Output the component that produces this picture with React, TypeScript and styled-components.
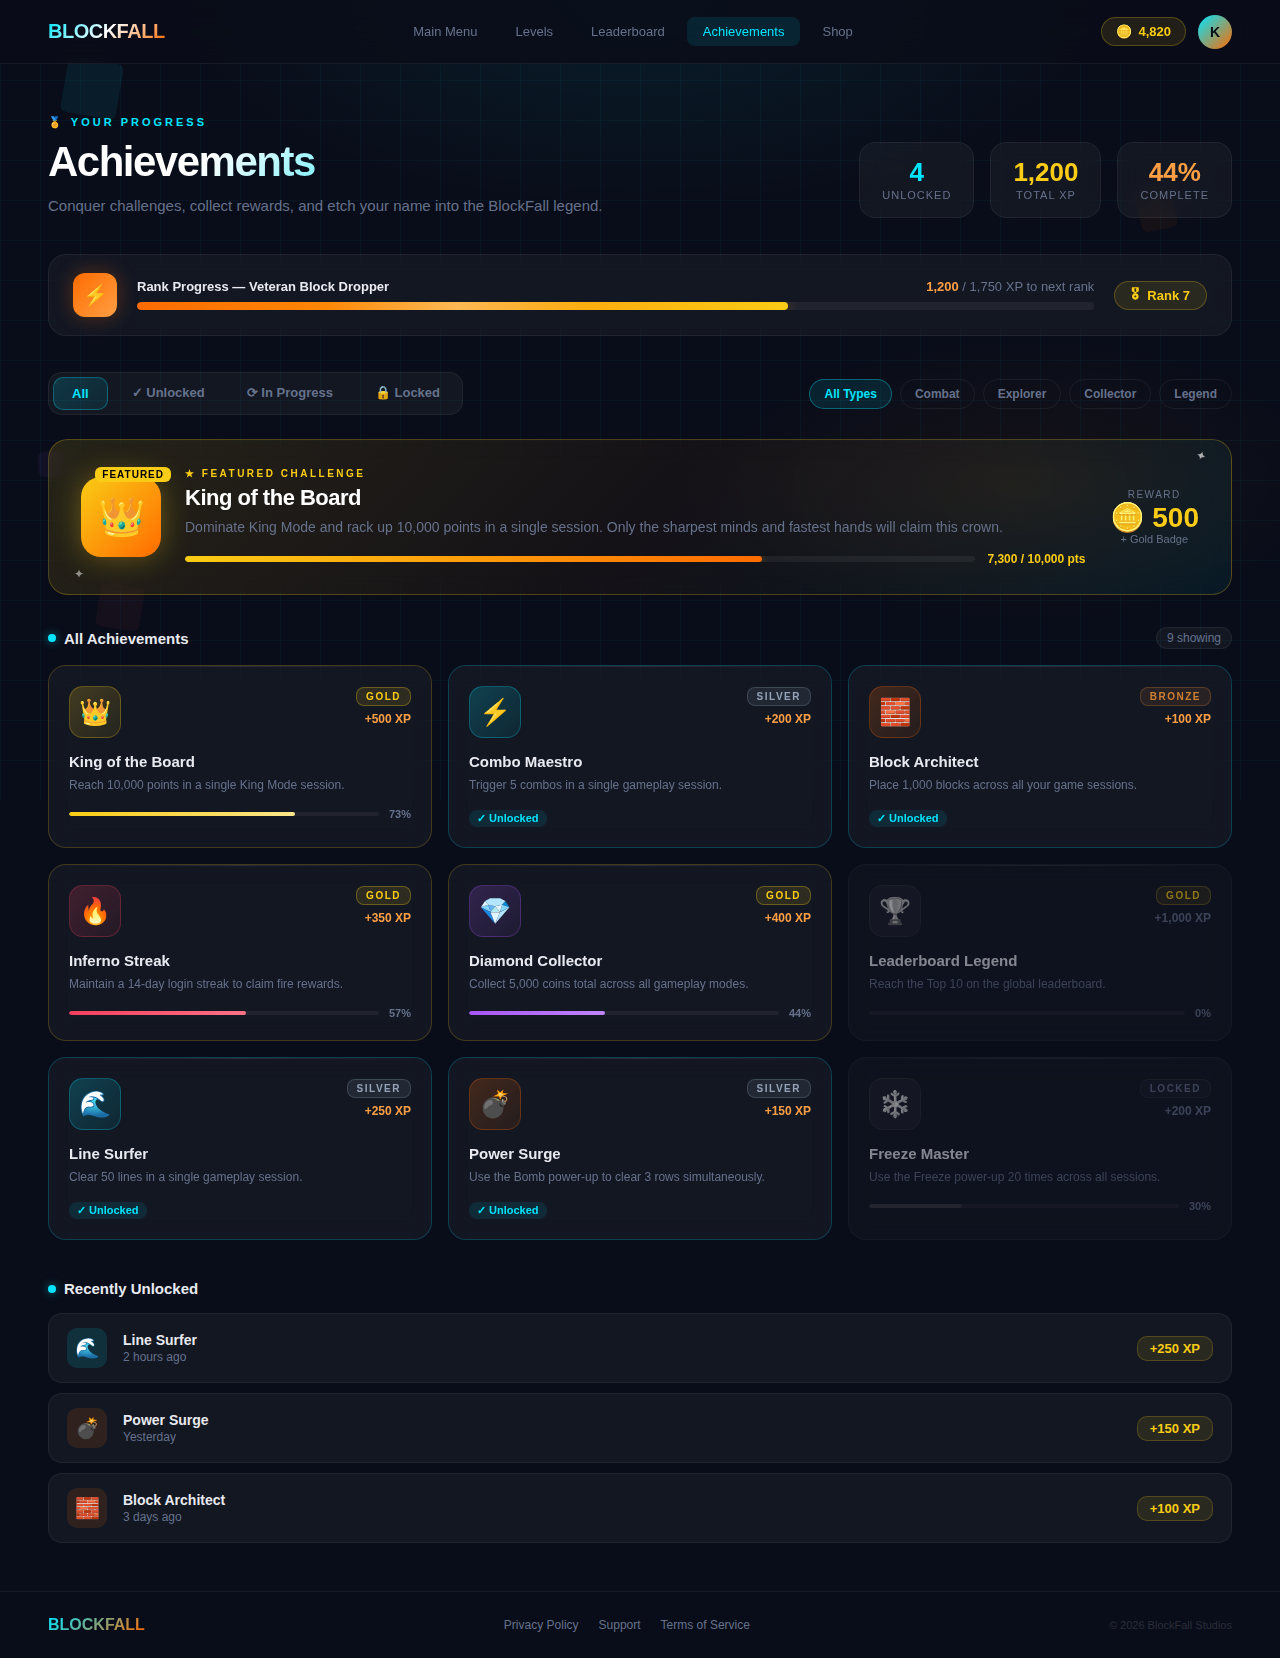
import React, { useState } from "react";
import styled, { createGlobalStyle, css } from "styled-components";

const c = {
  bg: "#090d19",
  text: "#e8eaf0",
  muted: "#66728c",
  cyan: "#00e5ff",
  gold: "#facc15",
  orange: "#ff6b00",
  amber: "#ff9f43",
  surface: "rgba(255, 255, 255, 0.045)",
  line: "rgba(255, 255, 255, 0.06)",
};

const GlobalStyle = createGlobalStyle`
  * { box-sizing: border-box; }
  body {
    margin: 0;
    background: ${c.bg};
    color: ${c.text};
    font-family: "Liberation Sans", Arial, sans-serif;
  }
  h1, h2, h3, p { margin: 0; }
  button { font-family: inherit; cursor: pointer; }
  a { text-decoration: none; }
`;

type Tint = "gold" | "cyan" | "orange" | "rose" | "violet" | "none";

const tintRgb: Record<Tint, string> = {
  gold: "250, 204, 21",
  cyan: "0, 229, 255",
  orange: "255, 107, 0",
  rose: "244, 63, 94",
  violet: "168, 85, 247",
  none: "255, 255, 255",
};

const Page = styled.div`
  position: relative;
  overflow: hidden;
`;

const Backdrop = styled.div`
  position: absolute;
  top: 0;
  left: 0;
  right: 0;
  height: 800px;
  pointer-events: none;
  background:
    linear-gradient(rgba(0, 229, 255, 0.04) 1px, transparent 1px) 0 0 / 40px 40px,
    linear-gradient(90deg, rgba(0, 229, 255, 0.04) 1px, transparent 1px) 0 0 / 40px 40px,
    radial-gradient(ellipse 36% 26% at 50% 0%, rgba(0, 229, 255, 0.08), transparent),
    radial-gradient(ellipse 24% 18% at 80% 60%, rgba(255, 107, 0, 0.05), transparent);
`;

const Block = styled.span<{ $tint: Tint; $size: number; $turn: number; $x: string; $y: number; $alpha: number }>`
  position: absolute;
  left: ${(p) => p.$x};
  top: ${(p) => p.$y}px;
  width: ${(p) => p.$size}px;
  height: ${(p) => p.$size}px;
  border-radius: 6px;
  transform: rotate(${(p) => p.$turn}deg);
  background: rgba(${(p) => tintRgb[p.$tint]}, ${(p) => p.$alpha});
`;

const Nav = styled.header`
  position: relative;
  display: flex;
  align-items: center;
  justify-content: space-between;
  height: 64px;
  padding: 0 48px;
  background: rgba(9, 13, 25, 0.85);
  backdrop-filter: blur(20px);
  border-bottom: 1px solid ${c.line};
`;

const Logo = styled.a`
  font-size: 20px;
  line-height: 23px;
  font-weight: 900;
  letter-spacing: -0.5px;
  color: transparent;
  background: linear-gradient(135deg, ${c.cyan}, #fff 50%, ${c.orange});
  background-clip: text;
`;

const FooterLogo = styled.span`
  font-size: 16px;
  line-height: 18px;
  font-weight: 900;
  color: transparent;
  background: linear-gradient(135deg, ${c.cyan}, ${c.orange});
  background-clip: text;
`;

const NavLinks = styled.nav`
  display: flex;
  gap: 6px;
`;

const NavLink = styled.a<{ $active?: boolean }>`
  padding: 7px 16px;
  border-radius: 8px;
  font-size: 13px;
  line-height: 15px;
  color: ${(p) => (p.$active ? c.cyan : c.muted)};
  background: ${(p) => (p.$active ? "rgba(0, 229, 255, 0.1)" : "none")};
`;

const NavRight = styled.div`
  display: flex;
  align-items: center;
  gap: 12px;
`;

const goldPill = css`
  color: ${c.gold};
  font-size: 13px;
  line-height: 15px;
  font-weight: 700;
  white-space: nowrap;
  border: 1px solid rgba(250, 204, 21, 0.25);
  background: rgba(250, 204, 21, 0.1);
`;

const Coins = styled.div`
  ${goldPill}
  display: flex;
  gap: 6px;
  padding: 6px 14px;
  border-radius: 20px;
`;

const Avatar = styled.div`
  display: grid;
  place-items: center;
  width: 34px;
  height: 34px;
  border-radius: 50%;
  font-size: 14px;
  font-weight: 700;
  color: ${c.bg};
  background: linear-gradient(135deg, ${c.cyan}, ${c.orange});
`;

const Main = styled.main`
  position: relative;
  padding: 48px;
`;

const Hero = styled.section`
  display: flex;
  flex-wrap: wrap;
  gap: 24px;
  align-items: flex-end;
  justify-content: space-between;
`;

const Eyebrow = styled.p`
  font-size: 11px;
  line-height: 20px;
  font-weight: 700;
  letter-spacing: 3px;
  color: ${c.cyan};
`;

const Title = styled.h1`
  margin: 6px 0 8px;
  font-size: 42px;
  line-height: 48px;
  font-weight: 900;
  letter-spacing: -1.5px;
  color: transparent;
  background: linear-gradient(135deg, #fff 30%, ${c.cyan} 75%);
  background-clip: text;
`;

const Lead = styled.p`
  font-size: 15px;
  line-height: 24px;
  color: ${c.muted};
`;

const Stats = styled.div`
  display: flex;
  gap: 16px;
`;

const Stat = styled.div`
  padding: 16px 22px;
  text-align: center;
  border: 1px solid ${c.line};
  border-radius: 16px;
  background: ${c.surface};
  backdrop-filter: blur(12px);
`;

const StatValue = styled.div<{ $color: string }>`
  font-size: 26px;
  line-height: 26px;
  font-weight: 800;
  color: ${(p) => p.$color};
`;

const StatLabel = styled.div`
  margin-top: 4px;
  font-size: 11px;
  line-height: 12px;
  letter-spacing: 1px;
  color: ${c.muted};
`;

const RankCard = styled.section`
  display: flex;
  align-items: center;
  gap: 20px;
  margin-top: 36px;
  padding: 18px 24px;
  border: 1px solid ${c.line};
  border-radius: 18px;
  background: ${c.surface};
  backdrop-filter: blur(12px);
`;

const RankIcon = styled.div`
  display: grid;
  place-items: center;
  flex: none;
  width: 44px;
  height: 44px;
  border-radius: 12px;
  font-size: 20px;
  background: linear-gradient(135deg, ${c.orange}, ${c.amber});
  box-shadow: 0 0 20px rgba(255, 107, 0, 0.3);
`;

const RankBody = styled.div`
  flex: 1;
  min-width: 0;
`;

const RankRow = styled.div`
  display: flex;
  justify-content: space-between;
  margin-bottom: 8px;
  font-size: 13px;
  line-height: 14px;
  color: ${c.muted};
`;

const RankTitle = styled.h2`
  font-size: 13px;
  font-weight: 700;
  color: ${c.text};
`;

const RankXp = styled.b`
  color: ${c.amber};
`;

const Track = styled.div<{ $h: number }>`
  flex: 1;
  height: ${(p) => p.$h}px;
  overflow: hidden;
  border-radius: 4px;
  background: rgba(255, 255, 255, 0.06);
`;

const Fill = styled.div<{ $from: string; $to: string; $glow?: string; $shimmer?: boolean }>`
  height: 100%;
  border-radius: 4px;
  background: ${(p) =>
    p.$shimmer
      ? `linear-gradient(90deg, transparent 29%, rgba(255, 255, 255, 0.3) 49%, transparent 69%),`
      : ""}
    linear-gradient(90deg, ${(p) => p.$from}, ${(p) => p.$to});
  box-shadow: ${(p) => (p.$glow ? `0 0 12px ${p.$glow}` : "none")};
`;

const RankPill = styled.div`
  ${goldPill}
  display: flex;
  gap: 8px;
  padding: 6px 16px;
  border-radius: 20px;
`;

const Medal = styled.span`
  font-family: "Noto Sans Symbols 2", "Noto Sans Symbols2", sans-serif;
`;

const Filters = styled.section`
  display: flex;
  flex-wrap: wrap;
  gap: 16px;
  align-items: center;
  justify-content: space-between;
  margin-top: 36px;
`;

const Tabs = styled.div`
  display: flex;
  align-items: flex-start;
  gap: 6px;
  padding: 4px;
  border: 1px solid ${c.line};
  border-radius: 14px;
  background: ${c.surface};
`;

const Tab = styled.button<{ $active: boolean }>`
  padding: 8px 18px;
  border: ${(p) => (p.$active ? "1px solid rgba(0, 229, 255, 0.3)" : "0")};
  border-radius: 10px;
  font-size: 13px;
  line-height: 15px;
  font-weight: 600;
  color: ${(p) => (p.$active ? c.cyan : c.muted)};
  background: ${(p) =>
    p.$active ? "linear-gradient(135deg, rgba(0, 229, 255, 0.16), rgba(0, 229, 255, 0.08))" : "none"};
`;

const Chips = styled.div`
  display: flex;
  gap: 8px;
`;

const Chip = styled.button<{ $active: boolean }>`
  padding: 7px 14px;
  border: 1px solid ${(p) => (p.$active ? "rgba(0, 229, 255, 0.35)" : c.line)};
  border-radius: 20px;
  font-size: 12px;
  line-height: 14px;
  font-weight: 600;
  color: ${(p) => (p.$active ? c.cyan : c.muted)};
  background: ${(p) => (p.$active ? "rgba(0, 229, 255, 0.1)" : "none")};
`;

const Featured = styled.section`
  position: relative;
  display: flex;
  align-items: center;
  gap: 24px;
  margin-top: 24px;
  padding: 28px 32px;
  border: 1px solid rgba(250, 204, 21, 0.25);
  border-radius: 20px;
  background:
    radial-gradient(ellipse 30% 90% at 82% 30%, rgba(250, 204, 21, 0.03), transparent),
    linear-gradient(135deg, rgba(250, 204, 21, 0.12), rgba(255, 107, 0, 0.05) 50%, rgba(0, 229, 255, 0.06));
  backdrop-filter: blur(12px);
`;

const Spark = styled.span<{ $corner: "top" | "bottom" }>`
  position: absolute;
  line-height: 12px;
  font-size: 12px;
  ${(p) =>
    p.$corner === "top"
      ? "top: 10px; right: 25px; color: rgba(255, 255, 255, 0.65); transform: rotate(20deg);"
      : "bottom: 14px; left: 25px; color: rgba(255, 255, 255, 0.5);"}
`;

const FeaturedIcon = styled.div`
  position: relative;
  display: grid;
  place-items: center;
  flex: none;
  width: 80px;
  height: 80px;
  border-radius: 20px;
  font-size: 38px;
  background: linear-gradient(135deg, ${c.gold}, ${c.orange});
  box-shadow: 0 0 30px rgba(250, 204, 21, 0.35);
`;

const FeaturedTag = styled.span`
  position: absolute;
  top: -10px;
  right: -10px;
  padding: 2px 7px;
  border-radius: 6px;
  font-size: 10px;
  line-height: 11px;
  font-weight: 800;
  letter-spacing: 1px;
  color: #000;
  background: ${c.gold};
`;

const FeaturedBody = styled.div`
  flex: 1;
  min-width: 0;
`;

const FeaturedLabel = styled.p`
  font-size: 10px;
  line-height: 12px;
  font-weight: 700;
  letter-spacing: 2.5px;
  color: ${c.gold};
`;

const FeaturedTitle = styled.h2`
  margin: 5px 0;
  font-size: 22px;
  line-height: 26px;
  font-weight: 800;
  letter-spacing: -0.5px;
  color: #fff;
`;

const FeaturedText = styled.p`
  margin-bottom: 14px;
  font-size: 14px;
  line-height: 22px;
  color: ${c.muted};
`;

const FeaturedProgress = styled.div`
  display: flex;
  align-items: center;
  gap: 12px;
  font-size: 12px;
  line-height: 14px;
  font-weight: 700;
  color: ${c.gold};
`;

const Reward = styled.div`
  flex: none;
  text-align: center;
  font-size: 11px;
  line-height: 12px;
  color: ${c.muted};
`;

const RewardLabel = styled.div`
  font-size: 10px;
  letter-spacing: 1.5px;
`;

const RewardValue = styled.div`
  margin-top: 2px;
  font-size: 28px;
  line-height: 30px;
  font-weight: 900;
  color: ${c.gold};
`;

const SectionHead = styled.div<{ $top: number }>`
  display: flex;
  align-items: center;
  justify-content: space-between;
  margin: ${(p) => p.$top}px 0 16px;
`;

const SectionTitle = styled.h2`
  display: flex;
  align-items: center;
  gap: 8px;
  font-size: 15px;
  line-height: 17px;
  font-weight: 700;

  &::before {
    content: "";
    width: 8px;
    height: 8px;
    border-radius: 50%;
    background: ${c.cyan};
    box-shadow: 0 0 8px rgba(0, 229, 255, 0.5);
  }
`;

const Count = styled.span`
  padding: 3px 10px;
  border: 1px solid ${c.line};
  border-radius: 20px;
  font-size: 12px;
  line-height: 14px;
  color: ${c.muted};
  background: ${c.surface};
`;

const Grid = styled.div`
  display: grid;
  grid-template-columns: repeat(3, minmax(0, 1fr));
  gap: 16px;

  @media (max-width: 960px) {
    grid-template-columns: 1fr;
  }
`;

const Card = styled.article<{ $edge: Tint; $locked: boolean }>`
  position: relative;
  padding: 20px;
  border: 1px solid ${(p) => (p.$edge === "none" ? c.line : `rgba(${tintRgb[p.$edge]}, 0.2)`)};
  border-radius: 18px;
  background: ${c.surface};
  backdrop-filter: blur(12px);
  opacity: ${(p) => (p.$locked ? 0.55 : 1)};

  &::before {
    content: "";
    position: absolute;
    inset: 0 0 auto;
    height: 1px;
    background: linear-gradient(90deg, transparent, rgba(255, 255, 255, 0.1), transparent);
  }
`;

const CardTop = styled.div`
  display: flex;
  justify-content: space-between;
  margin-bottom: 15px;
`;

const CardIcon = styled.div<{ $tint: Tint }>`
  display: grid;
  place-items: center;
  width: 52px;
  height: 52px;
  border-radius: 14px;
  font-size: 26px;
  ${(p) =>
    p.$tint === "none"
      ? css`
          border: 1px solid ${c.line};
          background: ${c.surface};
          filter: grayscale(1);
        `
      : css`
          border: 1px solid rgba(${tintRgb[p.$tint]}, 0.25);
          background: linear-gradient(135deg, rgba(${tintRgb[p.$tint]}, 0.2), rgba(${tintRgb[p.$tint]}, 0.08));
        `}
`;

const CardMeta = styled.div`
  display: flex;
  flex-direction: column;
  align-items: flex-end;
  gap: 6px;
  padding-top: 1px;
`;

const tierStyles = {
  GOLD: css`
    color: ${c.gold};
    border-color: rgba(250, 204, 21, 0.3);
    background: rgba(250, 204, 21, 0.12);
  `,
  SILVER: css`
    color: #94a3b8;
    border-color: rgba(148, 163, 184, 0.25);
    background: rgba(148, 163, 184, 0.12);
  `,
  BRONZE: css`
    color: #cd7f32;
    border-color: rgba(205, 127, 50, 0.3);
    background: rgba(205, 127, 50, 0.12);
  `,
  LOCKED: css`
    color: ${c.muted};
    border-color: ${c.line};
    background: rgba(255, 255, 255, 0.03);
  `,
};

type Tier = keyof typeof tierStyles;

const TierBadge = styled.span<{ $tier: Tier }>`
  padding: 3px 9px;
  border: 1px solid;
  border-radius: 8px;
  font-size: 10px;
  line-height: 11px;
  font-weight: 700;
  letter-spacing: 1.5px;
  ${(p) => tierStyles[p.$tier]}
`;

const CardXp = styled.span<{ $locked: boolean }>`
  font-size: 12px;
  line-height: 14px;
  font-weight: 700;
  color: ${(p) => (p.$locked ? c.muted : c.amber)};
`;

const CardName = styled.h3`
  font-size: 15px;
  line-height: 17px;
  font-weight: 700;
`;

const CardText = styled.p`
  margin-top: 6px;
  font-size: 12px;
  line-height: 18px;
  color: ${c.muted};
`;

const CardProgress = styled.div`
  display: flex;
  align-items: center;
  gap: 10px;
  margin: 14px 0 1px;
  font-size: 11px;
  line-height: 12px;
  font-weight: 600;
  color: ${c.muted};
`;

const Unlocked = styled.span`
  display: block;
  width: fit-content;
  margin-top: 16px;
  padding: 2px 8px;
  border-radius: 8px;
  font-size: 11px;
  line-height: 13px;
  font-weight: 700;
  color: ${c.cyan};
  background: rgba(0, 229, 255, 0.1);
`;

const RecentList = styled.ul`
  display: flex;
  flex-direction: column;
  gap: 10px;
  margin: 0;
  padding: 0;
  list-style: none;
`;

const RecentItem = styled.li`
  display: flex;
  align-items: center;
  gap: 16px;
  padding: 14px 18px;
  border: 1px solid ${c.line};
  border-radius: 14px;
  background: ${c.surface};
`;

const RecentIcon = styled.div<{ $tint: Tint }>`
  display: grid;
  place-items: center;
  width: 40px;
  height: 40px;
  border-radius: 10px;
  font-size: 20px;
  background: rgba(${(p) => tintRgb[p.$tint]}, 0.12);
`;

const RecentBody = styled.div`
  flex: 1;
`;

const RecentName = styled.h3`
  font-size: 14px;
  line-height: 16px;
  font-weight: 600;
`;

const RecentTime = styled.p`
  margin-top: 2px;
  font-size: 12px;
  line-height: 14px;
  color: ${c.muted};
`;

const RecentXp = styled.span`
  ${goldPill}
  padding: 4px 12px;
  border-color: rgba(250, 204, 21, 0.2);
  border-radius: 10px;
`;

const Footer = styled.footer`
  position: relative;
  display: flex;
  align-items: center;
  justify-content: space-between;
  padding: 24px 48px;
  border-top: 1px solid ${c.line};
`;

const FooterLinks = styled.nav`
  display: flex;
  gap: 20px;
`;

const FooterLink = styled.a`
  font-size: 12px;
  line-height: 14px;
  color: ${c.muted};
`;

const Copyright = styled.span`
  font-size: 11px;
  line-height: 12px;
  color: #2a2e3a;
`;

interface Achievement {
  icon: string;
  tint: Tint;
  edge: Tint;
  tier: Tier;
  xp: string;
  name: string;
  text: string;
  type: string;
  status: "unlocked" | "progress" | "locked";
  percent?: number;
  bar?: [string, string];
}

const achievements: Achievement[] = [
  { icon: "👑", tint: "gold", edge: "gold", tier: "GOLD", xp: "500", name: "King of the Board", text: "Reach 10,000 points in a single King Mode session.", type: "Legend", status: "progress", percent: 73, bar: [c.gold, "#fde68a"] },
  { icon: "⚡", tint: "cyan", edge: "cyan", tier: "SILVER", xp: "200", name: "Combo Maestro", text: "Trigger 5 combos in a single gameplay session.", type: "Combat", status: "unlocked" },
  { icon: "🧱", tint: "orange", edge: "cyan", tier: "BRONZE", xp: "100", name: "Block Architect", text: "Place 1,000 blocks across all your game sessions.", type: "Explorer", status: "unlocked" },
  { icon: "🔥", tint: "rose", edge: "gold", tier: "GOLD", xp: "350", name: "Inferno Streak", text: "Maintain a 14-day login streak to claim fire rewards.", type: "Explorer", status: "progress", percent: 57, bar: ["#f43f5e", "#fb7185"] },
  { icon: "💎", tint: "violet", edge: "gold", tier: "GOLD", xp: "400", name: "Diamond Collector", text: "Collect 5,000 coins total across all gameplay modes.", type: "Collector", status: "progress", percent: 44, bar: ["#a855f7", "#c084fc"] },
  { icon: "🏆", tint: "none", edge: "none", tier: "GOLD", xp: "1,000", name: "Leaderboard Legend", text: "Reach the Top 10 on the global leaderboard.", type: "Legend", status: "locked", percent: 0, bar: ["transparent", "transparent"] },
  { icon: "🌊", tint: "cyan", edge: "cyan", tier: "SILVER", xp: "250", name: "Line Surfer", text: "Clear 50 lines in a single gameplay session.", type: "Combat", status: "unlocked" },
  { icon: "💣", tint: "orange", edge: "cyan", tier: "SILVER", xp: "150", name: "Power Surge", text: "Use the Bomb power-up to clear 3 rows simultaneously.", type: "Combat", status: "unlocked" },
  { icon: "❄️", tint: "none", edge: "none", tier: "LOCKED", xp: "200", name: "Freeze Master", text: "Use the Freeze power-up 20 times across all sessions.", type: "Combat", status: "locked", percent: 30, bar: ["rgba(255,255,255,0.1)", "rgba(255,255,255,0.1)"] },
];

const recent: { icon: string; tint: Tint; name: string; time: string; xp: string }[] = [
  { icon: "🌊", tint: "cyan", name: "Line Surfer", time: "2 hours ago", xp: "+250 XP" },
  { icon: "💣", tint: "orange", name: "Power Surge", time: "Yesterday", xp: "+150 XP" },
  { icon: "🧱", tint: "orange", name: "Block Architect", time: "3 days ago", xp: "+100 XP" },
];

const links = ["Main Menu", "Levels", "Leaderboard", "Achievements", "Shop"];
const tabs = [
  { id: "all", label: "All" },
  { id: "unlocked", label: "✓ Unlocked" },
  { id: "progress", label: "⟳ In Progress" },
  { id: "locked", label: "🔒 Locked" },
];
const types = ["All Types", "Combat", "Explorer", "Collector", "Legend"];

interface BarProps {
  label: string;
  percent: number;
  height: number;
  from: string;
  to: string;
  glow?: string;
  shimmer?: boolean;
}

function Bar({ label, percent, height, from, to, glow, shimmer }: BarProps) {
  return (
    <Track $h={height} role="progressbar" aria-label={label} aria-valuenow={percent} aria-valuemin={0} aria-valuemax={100}>
      <Fill $from={from} $to={to} $glow={glow} $shimmer={shimmer} style={{ width: `${percent}%` }} />
    </Track>
  );
}

function AchievementCard({ item }: { item: Achievement }) {
  const locked = item.status === "locked";
  return (
    <Card $edge={item.edge} $locked={locked}>
      <CardTop>
        <CardIcon $tint={item.tint}>{item.icon}</CardIcon>
        <CardMeta>
          <TierBadge $tier={item.tier}>{item.tier}</TierBadge>
          <CardXp $locked={locked}>{`+${item.xp} XP`}</CardXp>
        </CardMeta>
      </CardTop>
      <CardName>{item.name}</CardName>
      <CardText>{item.text}</CardText>
      {item.bar ? (
        <CardProgress>
          <Bar label={item.name} percent={item.percent ?? 0} height={4} from={item.bar[0]} to={item.bar[1]} />
          <span>{`${item.percent}%`}</span>
        </CardProgress>
      ) : (
        <Unlocked>✓ Unlocked</Unlocked>
      )}
    </Card>
  );
}

export default function App() {
  const [tab, setTab] = useState("all");
  const [type, setType] = useState("All Types");
  const shown = achievements.filter(
    (a) => (tab === "all" || a.status === tab) && (type === "All Types" || a.type === type)
  );

  return (
    <Page>
      <GlobalStyle />
      <Backdrop>
        <Block $tint="cyan" $size={56} $turn={10} $x="5%" $y={60} $alpha={0.07} />
        <Block $tint="orange" $size={36} $turn={-12} $x="89%" $y={194} $alpha={0.05} />
        <Block $tint="violet" $size={26} $turn={-5} $x="3%" $y={451} $alpha={0.06} />
        <Block $tint="rose" $size={44} $turn={9} $x="98px" $y={585} $alpha={0.06} />
      </Backdrop>

      <Nav>
        <Logo href="#">BLOCKFALL</Logo>
        <NavLinks>
          {links.map((l) => (
            <NavLink key={l} href="#" $active={l === "Achievements"}>
              {l}
            </NavLink>
          ))}
        </NavLinks>
        <NavRight>
          <Coins>
            <span>🪙</span>
            <span>4,820</span>
          </Coins>
          <Avatar>K</Avatar>
        </NavRight>
      </Nav>

      <Main>
        <Hero>
          <div>
            <Eyebrow>🏅 YOUR PROGRESS</Eyebrow>
            <Title>Achievements</Title>
            <Lead>Conquer challenges, collect rewards, and etch your name into the BlockFall legend.</Lead>
          </div>
          <Stats>
            <Stat>
              <StatValue $color={c.cyan}>4</StatValue>
              <StatLabel>UNLOCKED</StatLabel>
            </Stat>
            <Stat>
              <StatValue $color={c.gold}>1,200</StatValue>
              <StatLabel>TOTAL XP</StatLabel>
            </Stat>
            <Stat>
              <StatValue $color={c.amber}>44%</StatValue>
              <StatLabel>COMPLETE</StatLabel>
            </Stat>
          </Stats>
        </Hero>

        <RankCard>
          <RankIcon>⚡</RankIcon>
          <RankBody>
            <RankRow>
              <RankTitle>Rank Progress — Veteran Block Dropper</RankTitle>
              <span>
                <RankXp>1,200</RankXp> / 1,750 XP to next rank
              </span>
            </RankRow>
            <Bar label="Rank progress" percent={68} height={8} from={c.orange} to={c.gold} glow="rgba(255, 107, 0, 0.4)" shimmer />
          </RankBody>
          <RankPill>
            <Medal>🎖</Medal>
            <span>Rank 7</span>
          </RankPill>
        </RankCard>

        <Filters>
          <Tabs>
            {tabs.map((t) => (
              <Tab key={t.id} type="button" $active={tab === t.id} aria-pressed={tab === t.id} onClick={() => setTab(t.id)}>
                {t.label}
              </Tab>
            ))}
          </Tabs>
          <Chips>
            {types.map((t) => (
              <Chip key={t} type="button" $active={type === t} aria-pressed={type === t} onClick={() => setType(t)}>
                {t}
              </Chip>
            ))}
          </Chips>
        </Filters>

        <Featured>
          <Spark $corner="top">✦</Spark>
          <Spark $corner="bottom">✦</Spark>
          <FeaturedIcon>
            👑
            <FeaturedTag>FEATURED</FeaturedTag>
          </FeaturedIcon>
          <FeaturedBody>
            <FeaturedLabel>★ FEATURED CHALLENGE</FeaturedLabel>
            <FeaturedTitle>King of the Board</FeaturedTitle>
            <FeaturedText>
              Dominate King Mode and rack up 10,000 points in a single session. Only the sharpest minds and fastest hands will claim this crown.
            </FeaturedText>
            <FeaturedProgress>
              <Bar label="King of the Board" percent={73} height={6} from={c.gold} to={c.orange} glow="rgba(250, 204, 21, 0.3)" />
              <span>7,300 / 10,000 pts</span>
            </FeaturedProgress>
          </FeaturedBody>
          <Reward>
            <RewardLabel>REWARD</RewardLabel>
            <RewardValue>🪙 500</RewardValue>
            <div>+ Gold Badge</div>
          </Reward>
        </Featured>

        <SectionHead $top={32}>
          <SectionTitle>All Achievements</SectionTitle>
          <Count>{`${shown.length} showing`}</Count>
        </SectionHead>
        <Grid>
          {shown.map((a) => (
            <AchievementCard key={a.name} item={a} />
          ))}
        </Grid>

        <SectionHead $top={40}>
          <SectionTitle>Recently Unlocked</SectionTitle>
        </SectionHead>
        <RecentList>
          {recent.map((r) => (
            <RecentItem key={r.name}>
              <RecentIcon $tint={r.tint}>{r.icon}</RecentIcon>
              <RecentBody>
                <RecentName>{r.name}</RecentName>
                <RecentTime>{r.time}</RecentTime>
              </RecentBody>
              <RecentXp>{r.xp}</RecentXp>
            </RecentItem>
          ))}
        </RecentList>
      </Main>

      <Footer>
        <FooterLogo>BLOCKFALL</FooterLogo>
        <FooterLinks>
          <FooterLink href="#">Privacy Policy</FooterLink>
          <FooterLink href="#">Support</FooterLink>
          <FooterLink href="#">Terms of Service</FooterLink>
        </FooterLinks>
        <Copyright>© 2026 BlockFall Studios</Copyright>
      </Footer>
    </Page>
  );
}
